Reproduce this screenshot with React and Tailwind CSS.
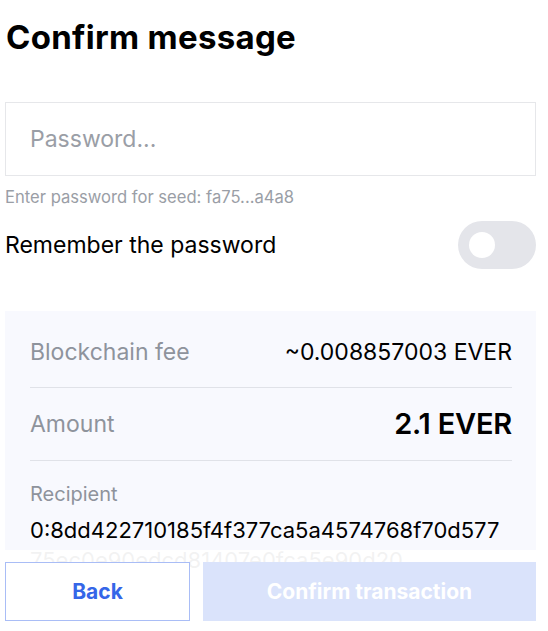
import React, { useState } from "react";

const font = { fontFamily: "Inter, 'Noto Sans', sans-serif" };

function Toggle({ on, onChange }) {
  return (
    <button
      onClick={() => onChange(!on)}
      className={`flex h-[48px] w-[78px] shrink-0 items-center rounded-full px-[11px] ${
        on ? "justify-end bg-[#3566e8]" : "justify-start bg-[#e4e5ea]"
      }`}
    >
      <span className="block h-[26px] w-[26px] rounded-full bg-white" />
    </button>
  );
}

export default function App() {
  const [remember, setRemember] = useState(false);
  const [password, setPassword] = useState("");

  return (
    <div style={font} className="relative flex h-screen w-full flex-col overflow-hidden bg-white text-black">
      <div className="flex-1 overflow-hidden pl-[5px] pr-[12px]">
        <h1 className="pt-[17px] pl-px text-[33px] font-bold leading-[40px] tracking-[0.3px]">Confirm message</h1>

        <input
          type="password"
          value={password}
          onChange={(e) => setPassword(e.target.value)}
          placeholder="Password..."
          className="mt-[45px] block h-[74px] w-full border border-[#e6e7ea] px-[24px] text-[23px] outline-none placeholder:text-[#9a9ea6]"
        />
        <p className="mt-[11px] text-[16.6px] leading-[20px] text-[#9a9ea6]">Enter password for seed: fa75...a4a8</p>

        <div className="mt-[14px] flex items-center justify-between">
          <span className="text-[23px] leading-[28px]">Remember the password</span>
          <Toggle on={remember} onChange={setRemember} />
        </div>

        <div className="mt-[42px] bg-[#f8f9fe] px-[25px] pt-[6px] pr-[24px]">
          <div className="flex items-center justify-between border-b border-[#e0e2e8] py-[21px]">
            <span className="text-[23px] leading-[28px] text-[#8e939c]">Blockchain fee</span>
            <span className="text-[23px] leading-[28px]">~0.008857003 EVER</span>
          </div>
          <div className="flex items-center justify-between border-b border-[#e0e2e8] py-[19px]">
            <span className="text-[23px] leading-[28px] text-[#8e939c]">Amount</span>
            <span className="text-[29px] font-semibold leading-[34px] tracking-[-0.2px]">2.1 EVER</span>
          </div>
          <div className="pt-[21px] pb-[20px]">
            <div className="text-[20px] leading-[24px] text-[#8e939c]">Recipient</div>
            <div className="mt-[9px] break-all text-[22px] leading-[30px]">
              0:8dd422710185f4f377ca5a4574768f70d57775ec0e90edcd81407e0fca5e90d20
            </div>
          </div>
        </div>
      </div>

      {/* footer overlays the scrolled content */}
      <div className="absolute inset-x-0 bottom-0 bg-white/95 pt-[12px] pb-[10px] pl-[5px] pr-[12px]">
        <div className="flex gap-[13px]">
          <button className="h-[59px] w-[185px] border border-[#a9bdf6] bg-white text-[21px] font-bold text-[#3566e8]">
            Back
          </button>
          <button className="h-[59px] flex-1 bg-[#dae3fb] text-[21px] font-bold text-white">
            Confirm transaction
          </button>
        </div>
      </div>
    </div>
  );
}
